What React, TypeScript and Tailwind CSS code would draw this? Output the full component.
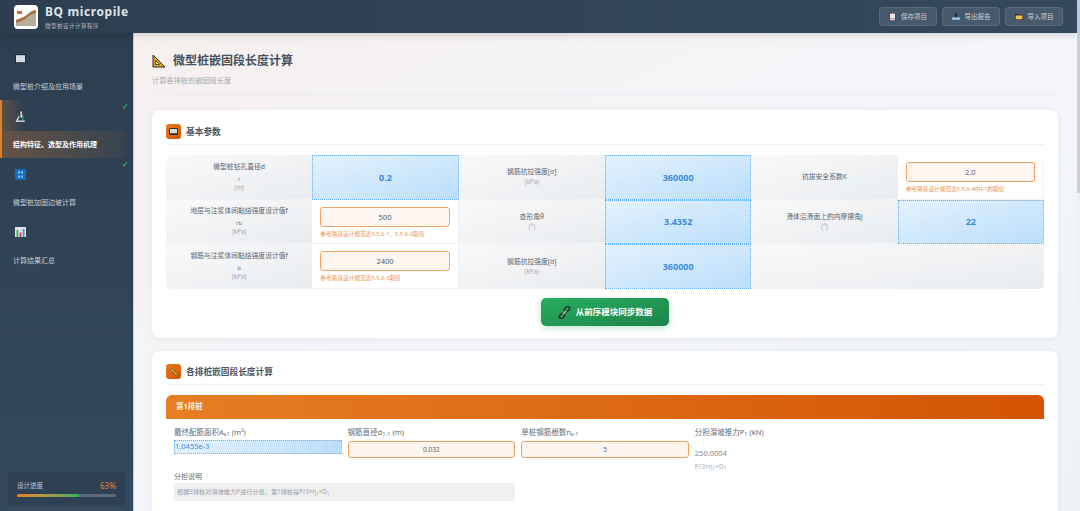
import type { ReactNode } from "react";

const BookIcon = () => (
  <svg width="11" height="9" viewBox="0 0 11 9" className="block">
    <rect width="11" height="9" rx="1" fill="#1f2b36" />
    <rect x="1" y="1.2" width="9" height="7" fill="#d6dce1" />
    <rect x="5.2" y="1.2" width=".6" height="7" fill="#bcc4cb" />
  </svg>
);

const MicroscopeIcon = () => (
  <svg width="11" height="12" viewBox="0 0 11 12" fill="none" className="block">
    <path d="M.8 11.2h9" stroke="#e9ecef" strokeWidth="1.3" />
    <path d="M1.8 10.6 4.5 6" stroke="#e9ecef" strokeWidth="1.2" />
    <rect x="5" y="1" width="2.4" height="7" fill="#cfd5da" stroke="#1e1e1e" strokeWidth=".6" />
    <path d="M7.8 10.6V5" stroke="#50c7a8" strokeWidth=".9" />
  </svg>
);

const NumbersIcon = () => (
  <svg width="11" height="11" viewBox="0 0 11 11" className="block">
    <rect width="11" height="11" rx=".8" fill="#176cba" />
    <path d="M3 2.2h2v2.4H3zM6 2.2h2v2.4H6zM3 6.4h2v2.4H3zM6 6.4h2v2.4H6z" fill="#7fbdf0" />
  </svg>
);

const ChartIcon = () => (
  <svg width="11" height="10" viewBox="0 0 11 10" className="block">
    <rect width="11" height="10" fill="#dfe3e7" />
    <rect x="1.5" y="3" width="1.8" height="7" fill="#2fb457" />
    <rect x="4.6" y="5.5" width="1.8" height="4.5" fill="#d8443c" />
    <rect x="7.7" y="2" width="1.8" height="8" fill="#4a90d9" />
  </svg>
);

const SetSquareIcon = () => (
  <svg width="14" height="14" viewBox="0 0 14 14" className="block">
    <path d="M1 1v12h12z" fill="#e8a90c" stroke="#2a2a2a" strokeWidth="1" strokeLinejoin="round" />
    <path d="M3.5 6.5v4h4z" fill="#f6f2ee" stroke="#2a2a2a" strokeWidth=".8" />
  </svg>
);

const KeyboardIcon = () => (
  <svg width="9" height="7" viewBox="0 0 9 7" className="block">
    <rect width="9" height="7" rx=".8" fill="#2f2f2f" />
    <rect x="1" y="1" width="7" height="4.2" fill="#d9dde2" />
  </svg>
);

const RulerIcon = () => (
  <svg width="10" height="10" viewBox="0 0 10 10" className="block">
    <path d="M1 2.4 2.4 1 9 7.6 7.6 9z" fill="#e6b93c" stroke="#3b2a12" strokeWidth=".6" />
  </svg>
);

const SaveIcon = () => (
  <svg width="7" height="8" viewBox="0 0 7 8">
    <rect width="7" height="8" rx=".6" fill="#6d3148" />
    <rect x="1" y=".6" width="5" height="5" fill="#e7eaee" />
    <rect x="1" y="6" width="5" height="1.3" fill="#cfd3d8" />
  </svg>
);

const ExportIcon = () => (
  <svg width="8" height="7" viewBox="0 0 8 7">
    <path d="M4 0 6.2 2.6H1.8z" fill="#20242a" />
    <rect x="3.2" y="2.4" width="1.6" height="2" fill="#20242a" />
    <rect y="4.6" width="8" height="2.2" rx=".5" fill="#9dcbee" />
  </svg>
);

const FolderIcon = () => (
  <svg width="8" height="7" viewBox="0 0 8 7">
    <path d="M0 1h3l.8.8H8V7H0z" fill="#1f2125" />
    <path d="M.6 2.4h6.8v4H.6z" fill="#f3c14b" />
  </svg>
);

const LinkIcon = () => (
  <svg width="13" height="13" viewBox="0 0 13 13" fill="none" stroke="#26302b" strokeWidth="1.5">
    <rect x="6" y="1.2" width="6" height="3.8" rx="1.9" transform="rotate(-45 9 3.1)" />
    <rect x="1" y="8" width="6" height="3.8" rx="1.9" transform="rotate(-45 4 9.9)" />
    <path d="M4.8 8.2 8.2 4.8" stroke="#d7dcd9" strokeWidth="1.2" />
  </svg>
);

const Check = () => (
  <svg width="6" height="6" viewBox="0 0 6 6" fill="none" className="absolute right-[5px] top-[3px]">
    <path d="M.8 3.4 2.2 5 5.2.8" stroke="#27ae60" strokeWidth="1.1" />
  </svg>
);

function NavItem({
  icon,
  label,
  active,
  done,
}: {
  icon: ReactNode;
  label: string;
  active?: boolean;
  done?: boolean;
}) {
  return (
    <div
      className={`relative h-[58px] flex flex-col border-l-2 ${
        active ? "border-[#e67e22]" : "border-transparent"
      }`}
    >
      <div
        className={`h-[31px] w-[23px] flex items-center pl-[13px] pt-[1px] ${
          active ? "bg-gradient-to-r from-[#e67e22]/25 to-transparent" : ""
        }`}
      >
        <span className="shrink-0">{icon}</span>
      </div>
      {done && <Check />}
      <div
        className={`h-[27px] w-[123px] flex items-center pl-[11px] pt-[2px] text-[7px] ${
          active
            ? "bg-gradient-to-r from-[#e67e22]/30 to-[#e67e22]/5 text-white font-semibold"
            : "text-[#c9d1d8]"
        }`}
      >
        {label}
      </div>
    </div>
  );
}

function HeaderButton({ icon, label }: { icon: ReactNode; label: string }) {
  return (
    <button className="w-[58px] h-[19px] flex items-center justify-center gap-[5px] rounded-[4px] bg-white/10 border border-white/10 text-[6.5px] text-[#c7cfd6]">
      {icon}
      {label}
    </button>
  );
}

function LabelCell({ title, sub, unit }: { title: string; sub?: string; unit?: string }) {
  return (
    <div className="bg-gradient-to-br from-[#f8f9fa] to-[#e9ecef] flex flex-col items-center justify-center border-b border-[#f1f3f5] text-center">
      <div className="text-[6.8px] leading-[10px] text-[#5a6570]">{title}</div>
      {sub && <div className="text-[6px] leading-[8px] mt-[3px] text-[#6b7580]">{sub}</div>}
      {unit && <div className="text-[6.3px] leading-[8px] mt-[1px] text-[#a3abb3]">{unit}</div>}
    </div>
  );
}

function CalcCell({ value }: { value: string }) {
  return (
    <div className="bg-gradient-to-br from-[#e3f2fd] to-[#bbdefb] border border-dotted border-[#64b5f6] flex items-center justify-center text-[9px] font-bold text-[#3d8bdc]">
      {value}
    </div>
  );
}

function InputCell({ value, note }: { value: string; note: string }) {
  return (
    <div className="bg-white px-[8px] pt-[7px] border-r border-b border-[#eef1f5]">
      <input
        readOnly
        defaultValue={value}
        className="block w-full h-[20px] rounded-[3px] border border-[#f4a460] bg-[#fdf6f0] text-center text-[7.5px] text-[#555f6a] outline-none"
      />
      <div className="mt-[3px] text-[5.7px] leading-[8px] whitespace-nowrap text-[#ee9346]">{note}</div>
    </div>
  );
}

function SectionTitle({ icon, title }: { icon: ReactNode; title: string }) {
  return (
    <div className="h-[21px] flex items-start gap-[5px] border-b border-[#eef1f6]">
      <div className="w-[15px] h-[15px] rounded-[3px] bg-gradient-to-br from-[#e67e22] to-[#d35400] flex items-center justify-center">
        {icon}
      </div>
      <h3 className="pt-[1px] text-[8.7px] leading-[15px] font-semibold text-[#4a5662]">{title}</h3>
    </div>
  );
}

function FieldInput({ value }: { value: string }) {
  return (
    <input
      readOnly
      defaultValue={value}
      className="block w-full h-[17px] mt-[1px] rounded-[3px] border border-[#f0a060] bg-[#fdf4ee] text-center text-[6.5px] text-[#5a6570] outline-none"
    />
  );
}

function FieldLabel({ children }: { children: ReactNode }) {
  return <div className="h-[14px] text-[7.5px] leading-[12px] whitespace-nowrap text-[#626c77]">{children}</div>;
}

function App() {
  return (
    <div className="h-[511px] w-full overflow-hidden flex font-['Noto_Sans','Noto_Sans_CJK_SC',sans-serif]">
      <div className="flex-1 min-w-0 flex flex-col">
        {/* Header */}
        <header className="relative z-10 h-[33px] shrink-0 flex items-center justify-between px-[14px] bg-gradient-to-r from-[#2c3e50] to-[#34495e] shadow-[0_2px_8px_rgba(0,0,0,0.15)]">
          <div className="flex items-center gap-[7px]">
            <div className="w-[24px] h-[24px] rounded-[4px] bg-white overflow-hidden flex items-center justify-center">
              <svg width="20" height="18" viewBox="0 0 20 18">
                <path d="M0 18V12L8 9l8-6 4-1v16z" fill="#b9ae9a" />
                <path d="M0 12 8 9l8-6 4-1v3l-5 1.5L8 12l-8 3z" fill="#a5713f" />
                <rect x="1" y="3" width="5" height="3" fill="#d9674a" />
              </svg>
            </div>
            <div className="pt-[1px]">
              <div className="text-[12px] leading-[14px] font-bold tracking-[0.6px] text-[#dfe5ea]">BQ micropile</div>
              <div className="mt-[3px] text-[5.5px] leading-[8px] tracking-[0.5px] text-[#b4bec7]">微型桩设计计算程序</div>
            </div>
          </div>
          <div className="flex gap-[5px]">
            <HeaderButton icon={<SaveIcon />} label="保存项目" />
            <HeaderButton icon={<ExportIcon />} label="导出报告" />
            <HeaderButton icon={<FolderIcon />} label="导入项目" />
          </div>
        </header>

        <div className="flex-1 min-h-0 flex">
          {/* Sidebar */}
          <aside className="w-[134px] shrink-0 flex flex-col justify-between pt-[9px] pb-[5px] bg-gradient-to-b from-[#2c3e50] to-[#34495e] border-r border-[#c9ccd0]">
            <nav>
              <NavItem icon={<BookIcon />} label="微型桩介绍及应用场景" />
              <NavItem icon={<MicroscopeIcon />} label="结构特征、选型及作用机理" active done />
              <NavItem icon={<NumbersIcon />} label="微型桩加固边坡计算" done />
              <NavItem icon={<ChartIcon />} label="计算结果汇总" />
            </nav>
            <div className="mx-[8px] h-[34px] rounded-[4px] bg-[#2e4053] px-[9px] pt-[9px]">
              <div className="flex items-center justify-between h-[10px]">
                <span className="text-[6.5px] text-[#c3ccd4]">设计进度</span>
                <span className="text-[8px] font-medium text-[#dd7f2c]">63%</span>
              </div>
              <div className="mt-[3px] h-[3px] rounded-full bg-[#5b6b7a] overflow-hidden">
                <div className="h-full w-[63%] bg-gradient-to-r from-[#e67e22] to-[#27ae60]" />
              </div>
            </div>
          </aside>

          {/* Main */}
          <main className="flex-1 min-w-0 overflow-hidden pl-[18px] pr-[19px] pt-[20px] bg-gradient-to-br from-[#f6f0ee] via-[#f4f5fa] to-[#edf3f5]">
            <div className="h-[42px] border-b border-[#e8ebf1]">
              <div className="flex items-center gap-[7px] h-[16px]">
                <SetSquareIcon />
                <h1 className="text-[12px] leading-[16px] font-semibold text-[#44525f]">微型桩嵌固段长度计算</h1>
              </div>
              <p className="mt-[6px] text-[7.2px] leading-[10px] text-[#a0a9b1]">计算各排桩的嵌固段长度</p>
            </div>

            {/* 基本参数 */}
            <section className="mt-[15px] h-[228px] rounded-[8px] bg-white shadow-[0_1px_6px_rgba(30,50,80,0.07)] p-[14px]">
              <SectionTitle icon={<KeyboardIcon />} title="基本参数" />
              <div className="mt-[10px] h-[134px] grid grid-cols-6 grid-rows-3 rounded-[5px] overflow-hidden">
                <LabelCell title="微型桩钻孔直径d" sub="r" unit="(m)" />
                <CalcCell value="0.2" />
                <LabelCell title="钢筋抗拉强度[σ]" unit="(kPa)" />
                <CalcCell value="360000" />
                <LabelCell title="抗拔安全系数K" />
                <InputCell value="2.0" note="参考路基设计规范表5.5.6-4中K1的取值" />

                <LabelCell title="地层与注浆体间黏结强度设计值f" sub="rb" unit="(kPa)" />
                <InputCell value="500" note="参考路基设计规范表5.5.6-1、5.5.6-2取值" />
                <LabelCell title="查形角θ" unit="(°)" />
                <CalcCell value="3.4352" />
                <LabelCell title="滑体沿滑面上的内摩擦角j" unit="(°)" />
                <CalcCell value="22" />

                <LabelCell title="钢筋与注浆体间黏结强度设计值f" sub="b" unit="(kPa)" />
                <InputCell value="2400" note="参考路基设计规范表5.5.6-3取值" />
                <LabelCell title="钢筋抗拉强度[σ]" unit="(kPa)" />
                <CalcCell value="360000" />
                <div className="col-span-2 bg-gradient-to-br from-[#f8f9fa] to-[#e9ecef]" />
              </div>
              <div className="mt-[9px] flex justify-center">
                <button className="w-[128px] h-[28px] flex items-center justify-center gap-[5px] rounded-[5px] bg-gradient-to-br from-[#27ae60] to-[#1e8449] shadow-[0_2px_6px_rgba(39,174,96,0.3)] text-[8.5px] font-bold text-white">
                  <LinkIcon />
                  从前序模块同步数据
                </button>
              </div>
            </section>

            {/* 各排桩嵌固段长度计算 */}
            <section className="mt-[13px] rounded-[8px] bg-white shadow-[0_1px_6px_rgba(30,50,80,0.07)] p-[14px] pt-[13px]">
              <SectionTitle icon={<RulerIcon />} title="各排桩嵌固段长度计算" />
              <div className="mt-[10px]">
                <div className="h-[24px] flex items-center px-[10px] rounded-t-[6px] bg-gradient-to-r from-[#e67e22] to-[#d35400] text-[7.5px] font-bold text-[#fbeee2]">
                  第1排桩
                </div>
                <div className="grid grid-cols-5 gap-x-[6px] px-[8px] pt-[7px]">
                  <div>
                    <FieldLabel>
                      最终配筋面积A<sub>s1</sub> (m²)
                    </FieldLabel>
                    <div className="h-[14px] flex items-center bg-gradient-to-r from-[#e3f2fd] to-[#bbdefb] border border-dotted border-[#64b5f6] text-[7.5px] text-[#3d8bdc]">
                      1.0455e-3
                    </div>
                  </div>
                  <div>
                    <FieldLabel>
                      钢筋直径d<sub>1-1</sub> (m)
                    </FieldLabel>
                    <FieldInput value="0.032" />
                  </div>
                  <div>
                    <FieldLabel>
                      单桩钢筋根数n<sub>s-1</sub>
                    </FieldLabel>
                    <FieldInput value="5" />
                  </div>
                  <div>
                    <FieldLabel>
                      分担滑坡推力P<sub>1</sub> (kN)
                    </FieldLabel>
                    <div className="mt-[6px] text-[7.5px] leading-[14px] text-[#7f868e]">250.0004</div>
                    <div className="mt-[3px] text-[6.5px] leading-[8px] text-[#a9b0b7]">
                      P/3×η<sub>1</sub>×D<sub>1</sub>
                    </div>
                  </div>
                  <div />
                  <div className="col-span-2 mt-[1px]">
                    <div className="h-[11px] text-[7px] leading-[10px] text-[#626c77]">分担说明</div>
                    <div className="h-[18px] flex items-center px-[3px] rounded-[2px] bg-[#f0f0f0] text-[6.2px] text-[#98a0a8]">
                      <span>
                        根据3排桩对滑坡推力P进行分担，第1排桩是P/3×η<sub>1</sub>×D<sub>1</sub>
                      </span>
                    </div>
                  </div>
                </div>
              </div>
            </section>
          </main>
        </div>
      </div>

      {/* Scrollbar */}
      <div className="w-[3px] shrink-0 bg-[#eef2f5]">
        <div className="h-[193px] bg-[#c8d1dd]" />
      </div>
    </div>
  );
}

export default App;
